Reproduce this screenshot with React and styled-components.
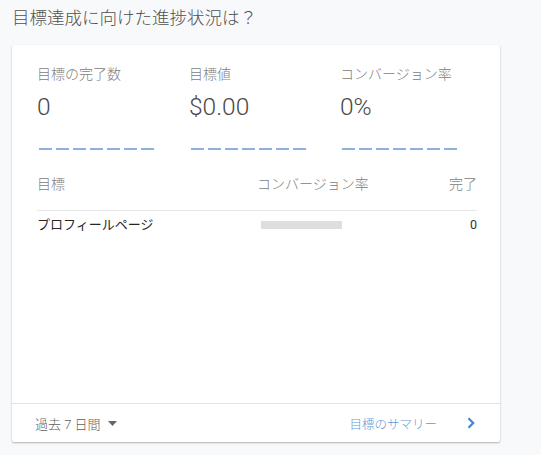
import React from "react";
import styled, { createGlobalStyle } from "styled-components";

const Global = createGlobalStyle`
  html, body { margin: 0; padding: 0; background: #f8f9fa; }
  body { font-family: Roboto, "Noto Sans CJK JP", sans-serif; }
`;

const Page = styled.div`
  width: 541px;
  height: 455px;
  background: #f8f9fa;
  box-sizing: border-box;
`;

const Title = styled.h1`
  margin: 0;
  height: 45px;
  box-sizing: border-box;
  padding: 7px 12px 0;
  font-size: 17.5px;
  line-height: 22px;
  font-weight: 300;
  color: #505050;
`;

const Card = styled.section`
  margin-left: 12px;
  width: 488px;
  height: 397px;
  background: #fff;
  border-radius: 2px;
  box-shadow: 0 1px 2px rgba(0, 0, 0, 0.28), 0 0 1px rgba(0, 0, 0, 0.08);
  display: flex;
  flex-direction: column;
`;

const Body = styled.div`
  padding: 19px 23px 0 25px;
`;

const Stats = styled.div`
  display: grid;
  grid-template-columns: 152px 151px 1fr;
`;

const Stat = styled.div`
  display: flex;
  flex-direction: column;
`;

const StatLabel = styled.div`
  font-size: 14px;
  line-height: 20px;
  font-weight: 300;
  color: #808080;
`;

const StatValue = styled.div`
  margin-top: 8px;
  font-size: 24.5px;
  line-height: 30px;
  font-weight: 300;
  color: #4a4a4a;
`;

const Spark = styled.svg`
  display: block;
  margin: 17px 0 0 2px;
`;

const TableHead = styled.div`
  margin-top: 15px;
  display: grid;
  grid-template-columns: 220px 1fr auto;
  padding-bottom: 16px;
  border-bottom: 1px solid #e8e8e8;
  font-size: 14px;
  line-height: 20px;
  font-weight: 300;
  color: #808080;
`;

const TableRow = styled.div`
  display: grid;
  grid-template-columns: 220px 1fr auto;
  align-items: center;
  padding-top: 4px;
  font-size: 13px;
  line-height: 20px;
  color: #262626;
`;

const Count = styled.span`
  font-size: 12.5px;
  color: #333;
`;

const Bar = styled.div`
  margin-left: 4px;
  width: 81px;
  height: 8px;
  background: #dedede;
`;

const Footer = styled.footer`
  margin-top: auto;
  height: 38px;
  border-top: 1px solid #e3e3e3;
  display: flex;
  align-items: center;
  justify-content: space-between;
  padding: 0 25px 0 23px;
`;

const Range = styled.button`
  border: 0;
  background: none;
  padding: 0;
  display: flex;
  align-items: center;
  gap: 7px;
  font-family: inherit;
  font-size: 13px;
  font-weight: 300;
  color: #5f5f5f;
`;

const Link = styled.a`
  display: flex;
  align-items: center;
  gap: 30px;
  font-size: 12.5px;
  font-weight: 300;
  color: #5f9ad8;
  text-decoration: none;
`;

const Sparkline = () => (
  <Spark width="118" height="20" viewBox="0 0 118 20">
    <line x1="0" y1="10" x2="118" y2="10" stroke="#6b97cf" strokeWidth="1.4" strokeDasharray="13 4" />
  </Spark>
);

const stats = [
  { label: "目標の完了数", value: "0" },
  { label: "目標値", value: "$0.00" },
  { label: "コンバージョン率", value: "0%" },
];

export default function App() {
  return (
    <Page>
      <Global />
      <Title>目標達成に向けた進捗状況は？</Title>
      <Card>
        <Body>
          <Stats>
            {stats.map((s) => (
              <Stat key={s.label}>
                <StatLabel>{s.label}</StatLabel>
                <StatValue>{s.value}</StatValue>
                <Sparkline />
              </Stat>
            ))}
          </Stats>
          <TableHead>
            <span>目標</span>
            <span>コンバージョン率</span>
            <span>完了</span>
          </TableHead>
          <TableRow>
            <span>プロフィールページ</span>
            <Bar />
            <Count>0</Count>
          </TableRow>
        </Body>
        <Footer>
          <Range>
            過去 7 日間
            <svg width="9" height="5" viewBox="0 0 9 5">
              <path d="M0 0 L9 0 L4.5 5 Z" fill="#666" />
            </svg>
          </Range>
          <Link href="#">
            目標のサマリー
            <svg width="8" height="12" viewBox="0 0 8 12">
              <path d="M1.5 1.2 L6.2 6 L1.5 10.8" fill="none" stroke="#4285d9" strokeWidth="2.2" />
            </svg>
          </Link>
        </Footer>
      </Card>
    </Page>
  );
}
